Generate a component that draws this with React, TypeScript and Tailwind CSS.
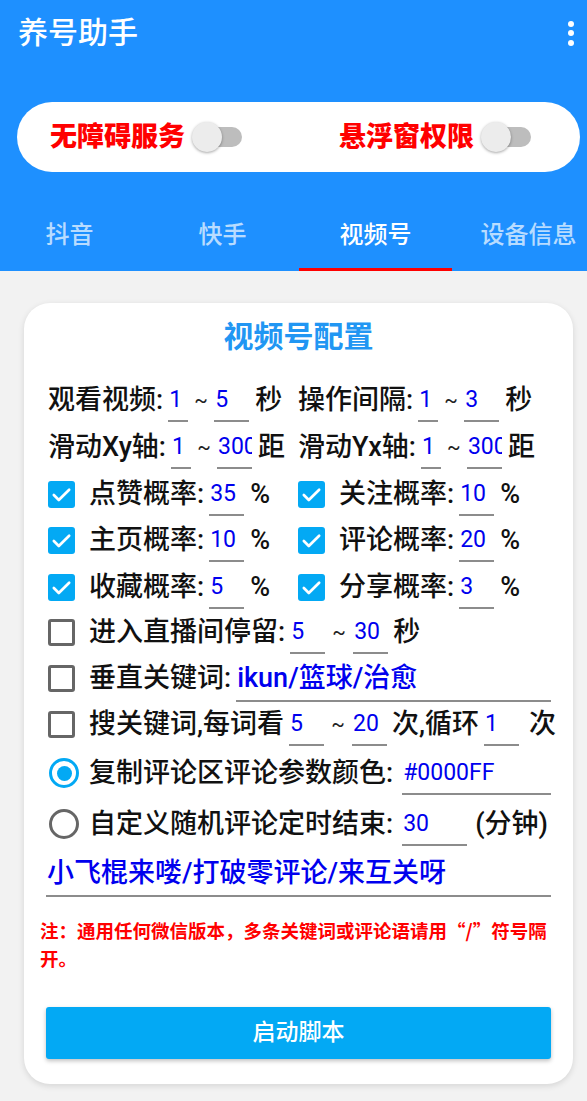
import React from "react";

const FONT = "font-[Roboto,'Noto_Sans_CJK_SC',sans-serif]";

function Field({
  value,
  w,
  big,
  ml = "ml-[5px]",
}: {
  value: string;
  w: string;
  big?: boolean;
  ml?: string;
}) {
  return (
    <span
      className={`${ml} ${w} ${
        big ? "text-[27px] font-medium pb-[5px]" : "text-[23px] pb-[3px]"
      } shrink-0 overflow-hidden whitespace-nowrap pl-[1px] leading-[34px] text-[#0000ee] border-b-2 border-[#8c8c8c]`}
    >
      {value}
    </span>
  );
}

function Label({ children, ml = "" }: { children: React.ReactNode; ml?: string }) {
  return (
    <span className={`${ml} shrink-0 whitespace-nowrap text-[27px] leading-[34px] font-medium text-[#111]`}>
      {children}
    </span>
  );
}

function Tilde({ w = "w-[26px]" }: { w?: string }) {
  return (
    <span className={`${w} shrink-0 text-center text-[20px] leading-[34px] text-[#222]`}>~</span>
  );
}

function Check({ on }: { on: boolean }) {
  if (on) {
    return (
      <span className="mt-[4px] flex h-[27px] w-[27px] shrink-0 items-center justify-center rounded-[3px] bg-[#03a9f4]">
        <svg width="23" height="23" viewBox="0 0 24 24" fill="none">
          <path d="M4 12.5l5.2 5.2L20 7" stroke="white" strokeWidth="2.8" strokeLinecap="round" strokeLinejoin="round" />
        </svg>
      </span>
    );
  }
  return (
    <span className="mt-[4px] h-[27px] w-[27px] shrink-0 rounded-[3px] border-[3px] border-[#666] bg-white" />
  );
}

function Radio({ on }: { on: boolean }) {
  return (
    <span
      className={`mt-[2px] ml-[1px] flex h-[30px] w-[30px] shrink-0 items-center justify-center rounded-full border-[3px] ${
        on ? "border-[#03a9f4]" : "border-[#666]"
      }`}
    >
      {on && <span className="h-[15px] w-[15px] rounded-full bg-[#03a9f4]" />}
    </span>
  );
}

function Switch() {
  return (
    <span className="relative ml-[7px] h-[30px] w-[50px] shrink-0">
      <span className="absolute left-[4px] right-0 top-[5px] h-[20px] rounded-full bg-[#bdbdbd]" />
      <span className="absolute left-0 top-0 h-[30px] w-[30px] rounded-full bg-[#ececec] shadow-[0_1px_3px_rgba(0,0,0,0.35)]" />
    </span>
  );
}

function Prob({ label, value, on = true }: { label: string; value: string; on?: boolean }) {
  return (
    <div className="flex items-start pl-[2px]">
      <Check on={on} />
      <Label ml="ml-[14px]">{label}</Label>
      <Field value={value} w="w-[35px]" />
      <Label ml="ml-[6px]">%</Label>
    </div>
  );
}

export default function App() {
  const tabs = ["抖音", "快手", "视频号", "设备信息"];
  return (
    <div className={`${FONT} min-h-[1101px] w-[587px] overflow-hidden bg-[#f2f2f2]`}>
      <header className="bg-[#1e90ff]">
        <div className="flex h-[66px] items-center justify-between pl-[18px] pr-[13px]">
          <h1 className="text-[30px] font-medium leading-none text-white">养号助手</h1>
          <div className="flex flex-col gap-[3.5px]">
            <span className="h-[6px] w-[6px] rounded-full bg-white" />
            <span className="h-[6px] w-[6px] rounded-full bg-white" />
            <span className="h-[6px] w-[6px] rounded-full bg-white" />
          </div>
        </div>

        <div className="ml-[17px] mt-[36px] flex h-[70px] w-[563px] items-center rounded-full bg-white pl-[33px]">
          <span className="text-[27px] font-black leading-none text-[#ff0000]">无障碍服务</span>
          <Switch />
          <span className="ml-[97px] text-[27px] font-black leading-none text-[#ff0000]">悬浮窗权限</span>
          <Switch />
        </div>

        <div className="mt-[26px] flex h-[73px] overflow-hidden">
          <div className="ml-[-7px] flex">
            {tabs.map((t, i) => (
              <div key={t} className="flex w-[153px] shrink-0 flex-col">
                <div
                  className={`flex flex-1 items-center justify-center pt-[4px] text-[24px] font-medium ${
                    i === 2 ? "text-white" : "text-white/70"
                  }`}
                >
                  {t}
                </div>
                <div className={`h-[3px] ${i === 2 ? "bg-[#ff0000]" : ""}`} />
              </div>
            ))}
          </div>
        </div>
      </header>

      <main className="ml-[24px] mt-[32px] w-[549px] rounded-[26px] bg-white px-[22px] pb-[25px] pt-4 shadow-[0_2px_6px_rgba(0,0,0,0.12)]">
        <h2 className="text-center text-[30px] font-bold leading-[36px] text-[#2196f3]">视频号配置</h2>

        <div className="mt-[28px]">
          <div className="grid h-[47px] grid-cols-[250px_1fr] pl-[2px]">
            <div className="flex items-start">
              <Label>观看视频:</Label>
              <Field value="1" w="w-[20px]" />
              <Tilde />
              <Field value="5" w="w-[35px]" ml="" />
              <Label ml="ml-[6px]">秒</Label>
            </div>
            <div className="flex items-start">
              <Label>操作间隔:</Label>
              <Field value="1" w="w-[20px]" />
              <Tilde />
              <Field value="3" w="w-[35px]" ml="" />
              <Label ml="ml-[6px]">秒</Label>
            </div>
          </div>

          <div className="grid h-[47px] grid-cols-[250px_1fr] pl-[2px]">
            <div className="flex items-start">
              <Label>滑动Xy轴:</Label>
              <Field value="1" w="w-[20px]" />
              <Tilde />
              <Field value="300" w="w-[35px]" ml="" />
              <Label ml="ml-[6px]">距</Label>
            </div>
            <div className="flex items-start">
              <Label>滑动Yx轴:</Label>
              <Field value="1" w="w-[20px]" />
              <Tilde />
              <Field value="300" w="w-[35px]" ml="" />
              <Label ml="ml-[6px]">距</Label>
            </div>
          </div>

          <div className="grid h-[46px] grid-cols-[250px_1fr]">
            <Prob label="点赞概率:" value="35" />
            <Prob label="关注概率:" value="10" />
          </div>
          <div className="grid h-[47px] grid-cols-[250px_1fr]">
            <Prob label="主页概率:" value="10" />
            <Prob label="评论概率:" value="20" />
          </div>
          <div className="grid h-[45px] grid-cols-[250px_1fr]">
            <Prob label="收藏概率:" value="5" />
            <Prob label="分享概率:" value="3" />
          </div>

          <div className="flex h-[46px] items-start pl-[2px]">
            <Check on={false} />
            <Label ml="ml-[14px]">进入直播间停留:</Label>
            <Field value="5" w="w-[35px]" />
            <Tilde w="w-[28px]" />
            <Field value="30" w="w-[35px]" ml="" />
            <Label ml="ml-[5px]">秒</Label>
          </div>

          <div className="flex h-[46px] items-start pl-[2px]">
            <Check on={false} />
            <Label ml="ml-[14px]">垂直关键词:</Label>
            <Field value="ikun/篮球/治愈" w="flex-1" big />
          </div>

          <div className="flex h-[49px] items-start pl-[2px]">
            <Check on={false} />
            <Label ml="ml-[14px]">搜关键词,每词看</Label>
            <Field value="5" w="w-[35px]" />
            <Tilde w="w-[28px]" />
            <Field value="20" w="w-[35px]" ml="" />
            <Label ml="ml-[5px]">次,循环</Label>
            <Field value="1" w="w-[35px]" />
            <Label ml="ml-[10px]">次</Label>
          </div>

          <div className="flex h-[51px] items-start pl-[2px]">
            <Radio on />
            <Label ml="ml-[10px]">复制评论区评论参数颜色:</Label>
            <Field value="#0000FF" w="flex-1" ml="ml-[9px]" />
          </div>

          <div className="flex h-[49px] items-start pl-[2px]">
            <Radio on={false} />
            <Label ml="ml-[10px]">自定义随机评论定时结束:</Label>
            <Field value="30" w="w-[65px]" ml="ml-[9px]" />
            <Label ml="ml-[8px]">(分钟)</Label>
          </div>

          <div className="flex items-start">
            <Field value="小飞棍来喽/打破零评论/来互关呀" w="flex-1" big ml="" />
          </div>
        </div>

        <p className="ml-[-6px] mt-[19px] text-[18.5px] font-bold leading-[28px] text-[#ff0000]">
          注：通用任何微信版本，多条关键词或评论语请用
          <span className="font-['Noto_Sans_CJK_SC',sans-serif]">“/”</span>
          符号隔
          <br />
          开。
        </p>

        <button className="mt-[33px] flex h-[52px] w-full items-center justify-center rounded-[3px] bg-[#03a9f4] text-[23px] font-medium text-white shadow-[0_2px_4px_rgba(0,0,0,0.25)]">
          启动脚本
        </button>
      </main>
    </div>
  );
}
